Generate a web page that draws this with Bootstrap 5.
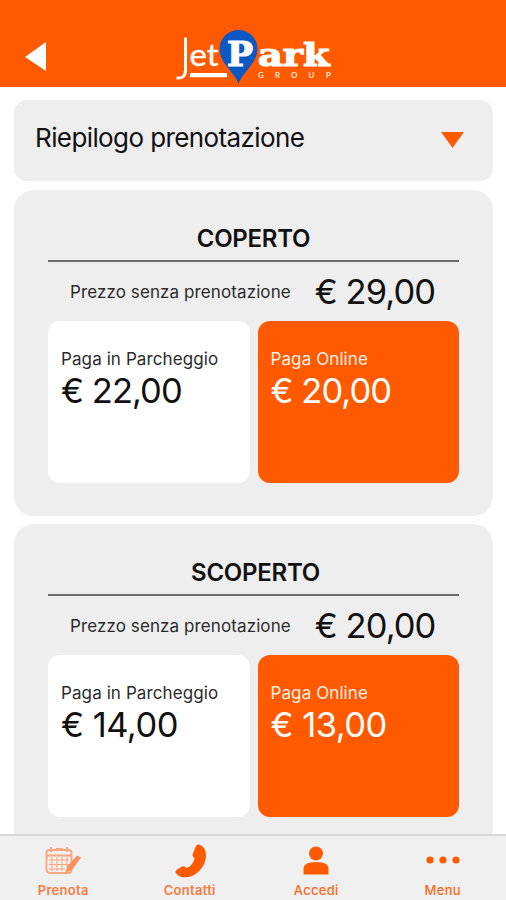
<!DOCTYPE html>
<html lang="it">
<head>
<meta charset="utf-8">
<meta name="viewport" content="width=device-width, initial-scale=1">
<title>JetPark Group</title>
<link href="https://cdn.jsdelivr.net/npm/bootstrap@5.3.0/dist/css/bootstrap.min.css" rel="stylesheet">
<style>
:root { --jp-orange: #ff5a00; --jp-grey: #eeeeee; }
body { font-family: Inter, "Liberation Sans", sans-serif; color: #111; height: 900px; }
.app-header { height: 87px; background: var(--jp-orange); padding: 0 29px 0 25px; }
.app-main { padding: 13px 13px 0 14px; gap: 9px; min-height: 0; }
.panel { background: var(--jp-grey); border-radius: 20px; }
.summary { height: 81px; border-radius: 13px; padding: 0 29px 6px 21px; font-size: 26px; letter-spacing: -.6px; }
.summary svg { margin-top: 5px; }
.offer { height: 326px; padding: 30px 34px 0 34px; }
.offer + .offer { margin-top: -1px; }
.offer-title { height: 42px; line-height: 37px; font-size: 24px; font-weight: 600; letter-spacing: -.25px; border-bottom: 2px solid #6c6c6c; }
.offer-base { height: 59px; padding-left: 22px; }
.label { font-size: 17px; line-height: 22px; letter-spacing: .1px; color: #2b2b2b; white-space: nowrap; }
.price { font-size: 34.5px; line-height: 42px; letter-spacing: -.95px; white-space: nowrap; }
.price-loose { letter-spacing: -.5px; }
.base-price { margin-left: 24px; }
.choice { height: 162px; border-radius: 12px; padding: 27px 13px; border: 0; }
.choice-online { background: var(--jp-orange); }
.choice-online .label { color: #fff0e6; }
.app-tabs { height: 66px; background: #f0f0f0; border-top: 2px solid #d9d9d9; color: #f96a24; }
.tab { font-size: 13px; font-weight: 500; letter-spacing: .3px; line-height: 16px; padding-top: 8px; color: inherit; }
.tab svg { height: 38px; fill: var(--jp-orange); }
.tab-strong { font-weight: 600; color: #f77b43; }
</style>
<script src="https://cdn.jsdelivr.net/npm/bootstrap@5.3.0/dist/js/bootstrap.bundle.min.js"></script>
</head>
<body class="d-flex flex-column overflow-hidden bg-white">
<header class="app-header d-flex align-items-end flex-shrink-0">
  <a href="#" aria-label="Indietro" class="d-block"><svg class="d-block" width="21" height="57" viewBox="0 0 21 57"><path d="M0 27 21 12V41Z" fill="#fff"/></svg></a>
  <svg class="d-block ms-auto me-auto" width="160" height="62" viewBox="174 25 160 62" role="img" aria-label="JetPark Group">
    <path d="M185.500 37.500V70Q185.500 79 176.500 78" fill="none" stroke="#fff" stroke-width="3"/>
    <text x="189.500" y="66" font-family="Lato" font-size="31" fill="#fff" stroke="#fff" stroke-width=".4" textLength="29" lengthAdjust="spacingAndGlyphs">et</text>
    <path d="M190 75.200H227" stroke="#fff" stroke-width="4.300"/>
    <path d="M238.500 84C236 74 219.500 63 219.500 49a19 19 0 0 1 38 0C257.500 63 241 74 238.500 84Z" fill="#0b57c4"/>
    <g font-family="DejaVu Serif" font-weight="700" fill="#fff" stroke="#fff" stroke-width="1.200">
      <text x="227" y="65.500" font-size="34" textLength="26" lengthAdjust="spacingAndGlyphs">P</text>
      <text x="258" y="65.500" font-size="31" textLength="71.500" lengthAdjust="spacingAndGlyphs">ark</text>
    </g>
    <text x="258 275 291 308.500 326" y="78" font-family="Lato" font-weight="700" font-size="8" fill="#ffe5d6">GROUP</text>
  </svg>
  <span class="pe-3"></span>
</header>
<main class="app-main d-flex flex-column flex-grow-1 overflow-hidden">
  <section class="panel summary d-flex align-items-center justify-content-between flex-shrink-0">
    <span>Riepilogo prenotazione</span>
    <svg width="23" height="16" viewBox="0 0 23 16"><path d="M0 0H23L11.500 16Z" fill="#ff5a00"/></svg>
  </section>
  <section class="panel offer flex-shrink-0">
    <h2 class="offer-title text-center mb-0">COPERTO</h2>
    <div class="offer-base d-flex align-items-center"><span class="label">Prezzo senza prenotazione</span><span class="price base-price">€ 29,00</span></div>
    <div class="row row-cols-2 gx-2">
      <div class="col"><div class="card choice"><span class="label">Paga in Parcheggio</span><span class="price">€ 22,00</span></div></div>
      <div class="col"><div class="card choice choice-online text-white"><span class="label">Paga Online</span><span class="price">€ 20,00</span></div></div>
    </div>
  </section>
  <section class="panel offer flex-shrink-0">
    <h2 class="offer-title text-center mb-0 ps-1">SCOPERTO</h2>
    <div class="offer-base d-flex align-items-center"><span class="label">Prezzo senza prenotazione</span><span class="price base-price">€ 20,00</span></div>
    <div class="row row-cols-2 gx-2">
      <div class="col"><div class="card choice"><span class="label">Paga in Parcheggio</span><span class="price price-loose">€ 14,00</span></div></div>
      <div class="col"><div class="card choice choice-online text-white"><span class="label">Paga Online</span><span class="price price-loose">€ 13,00</span></div></div>
    </div>
  </section>
</main>
<nav class="app-tabs row row-cols-4 g-0 flex-shrink-0 text-center">
  <a href="#" class="tab tab-strong col text-decoration-none d-flex flex-column align-items-center">
    <svg width="38" viewBox="0 0 38 38"><g fill="none" stroke="#f9a680" stroke-width="1.900"><rect x="2.500" y="6" width="25" height="23" rx="3"/><path d="M3 11.500H27M7 3v5M23 3v5M12 5h7"/><path d="M5 16H25M5 20.500H25M5 25H21M8 13V27M13 13V27M18 13V27M23 13V23" stroke-width="1"/></g><path d="M21 29 23.500 22 33 11.500 37 13.500 28 26Z" fill="#f8935f"/></svg>
    <span>Prenota</span></a>
  <a href="#" class="tab tab-strong col text-decoration-none d-flex flex-column align-items-center">
    <svg width="38" viewBox="0 0 38 38"><path d="M28 .5Q35 3 35 11C35 25 22 35.500 10 33Q6.500 32 4.500 28.500Q4 27 5.500 26L11 22.500Q12.500 21.800 13.500 22.500L15.500 24Q21.500 22 23.500 14.500L22 12.500Q21.200 11.500 21.700 10L25 2Q26 0 28 .5Z"/></svg>
    <span>Contatti</span></a>
  <a href="#" class="tab col text-decoration-none d-flex flex-column align-items-center">
    <svg width="38" viewBox="0 0 38 38"><circle cx="19" cy="9.500" r="7"/><path d="M6.500 30.500V25Q6.500 18 19 18T31.500 25V30.500Z"/></svg>
    <span>Accedi</span></a>
  <a href="#" class="tab col text-decoration-none d-flex flex-column align-items-center">
    <svg width="38" viewBox="0 0 38 38"><circle cx="6" cy="16" r="3.600"/><circle cx="19" cy="16" r="3.600"/><circle cx="32" cy="16" r="3.600"/></svg>
    <span>Menu</span></a>
</nav>
</body>
</html>
